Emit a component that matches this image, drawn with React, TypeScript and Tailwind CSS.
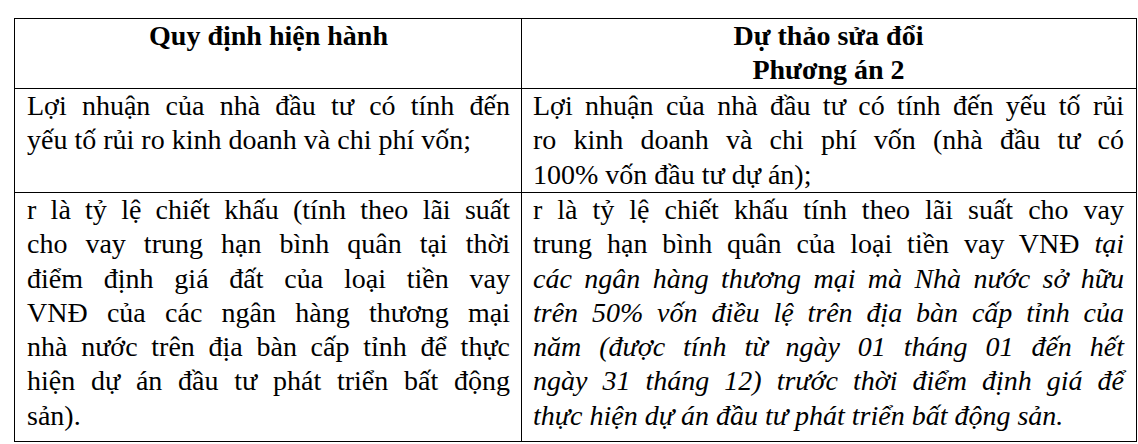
import type { ReactNode } from 'react';

// Each paragraph is given line by line so the breaks match the document.
// Every line except the last of a paragraph is justified edge to edge.
function Para({ lines }: { lines: ReactNode[] }) {
  return (
    <div>
      {lines.map((line, i) => (
        <div
          key={i}
          className={
            i < lines.length - 1
              ? 'whitespace-nowrap text-justify [text-align-last:justify]'
              : 'whitespace-nowrap text-left'
          }
        >
          {line}
        </div>
      ))}
    </div>
  );
}

const leftRow1 = [
  'Lợi nhuận của nhà đầu tư có tính đến',
  'yếu tố rủi ro kinh doanh và chi phí vốn;',
];

const rightRow1 = [
  'Lợi nhuận của nhà đầu tư có tính đến yếu tố rủi',
  'ro kinh doanh và chi phí vốn (nhà đầu tư có',
  '100% vốn đầu tư dự án);',
];

const leftRow2 = [
  'r là tỷ lệ chiết khấu (tính theo lãi suất',
  'cho vay trung hạn bình quân tại thời',
  'điểm định giá đất của loại tiền vay',
  'VNĐ của các ngân hàng thương mại',
  'nhà nước trên địa bàn cấp tỉnh để thực',
  'hiện dự án đầu tư phát triển bất động',
  'sản).',
];

const rightRow2: ReactNode[] = [
  'r là tỷ lệ chiết khấu tính theo lãi suất cho vay',
  <>
    trung hạn bình quân của loại tiền vay VNĐ <i>tại</i>
  </>,
  <i>các ngân hàng thương mại mà Nhà nước sở hữu</i>,
  <i>trên 50% vốn điều lệ trên địa bàn cấp tỉnh của</i>,
  <i>năm (được tính từ ngày 01 tháng 01 đến hết</i>,
  <i>ngày 31 tháng 12) trước thời điểm định giá để</i>,
  <i>thực hiện dự án đầu tư phát triển bất động sản.</i>,
];

export default function App() {
  const cellL = 'border-r border-b border-black pl-[12px] pr-[11px]';
  const cellR = 'border-r border-b border-black pl-[11px] pr-[12px]';

  return (
    <div className="w-[1138px] h-[444px] bg-white pt-[18px] pl-[14px] text-black font-['Liberation_Serif'] text-[28px] leading-[34.3px]">
      <div className="grid grid-cols-[507px_615px] border-l border-t border-black w-[1123px]">
        {/* header */}
        <div className={`${cellL} h-[70px] text-center font-bold`}>Quy định hiện hành</div>
        <div className={`${cellR} h-[70px] text-center font-bold`}>
          <div>Dự thảo sửa đổi</div>
          <div>Phương án 2</div>
        </div>

        {/* row 1 */}
        <div className={`${cellL} h-[104px]`}>
          <Para lines={leftRow1} />
        </div>
        <div className={`${cellR} h-[104px]`}>
          <Para lines={rightRow1} />
        </div>

        {/* row 2 */}
        <div className={`${cellL} h-[249px]`}>
          <Para lines={leftRow2} />
        </div>
        <div className={`${cellR} h-[249px]`}>
          <Para lines={rightRow2} />
        </div>
      </div>
    </div>
  );
}
